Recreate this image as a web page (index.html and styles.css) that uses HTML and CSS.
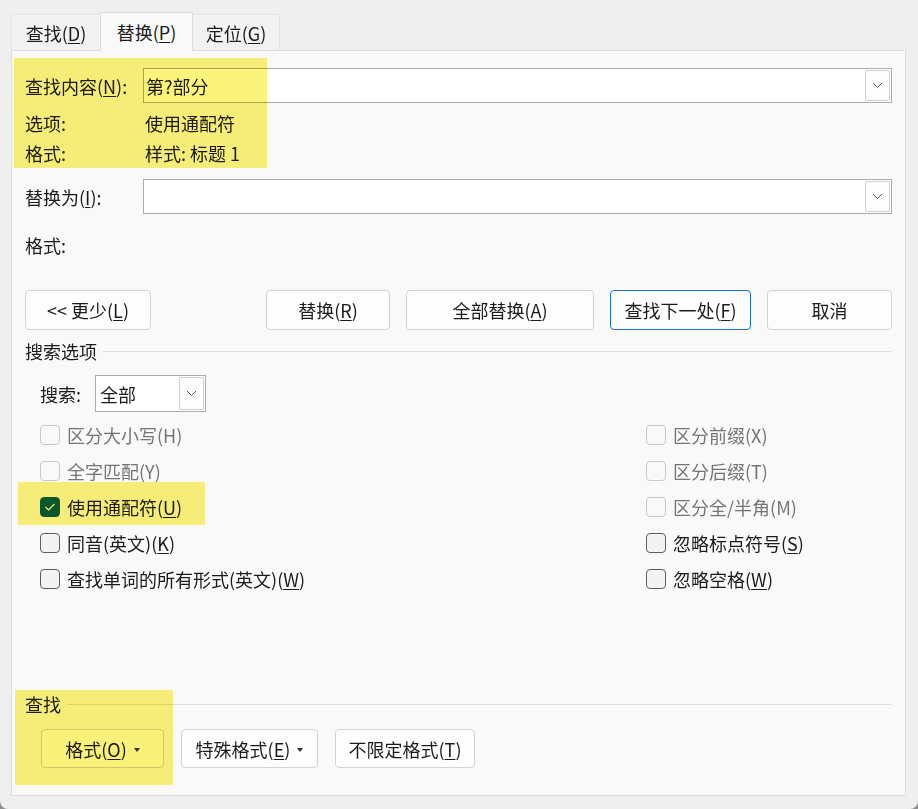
FILE: index.html
```html
<!DOCTYPE html>
<html>

<head>
    <title>查找和替换</title>
    <link rel="stylesheet" href="styles.css">
</head>

<body>
    <div class="window">
        <div class="tabs">
            <div class="tab tab-find">查找(<u>D</u>)</div>
            <div class="tab tab-replace active">替换(<u>P</u>)</div>
            <div class="tab tab-goto">定位(<u>G</u>)</div>
        </div>

        <div class="panel">
            <div class="row row-input">
                <div class="lbl">查找内容(<u>N</u>):</div>
                <div class="combo">
                    <span class="combo-text">第?部分</span>
                    <span class="drop">
                        <svg width="11" height="7" viewBox="0 0 11 7"><polyline points="1,1 5.5,5.5 10,1" fill="none" stroke="#555" stroke-width="1"/></svg>
                    </span>
                </div>
            </div>
            <div class="row row-text options-row">
                <div class="lbl">选项:</div>
                <div class="val">使用通配符</div>
            </div>
            <div class="row row-text">
                <div class="lbl">格式:</div>
                <div class="val">样式: 标题 1</div>
            </div>

            <div class="row row-input replace-row">
                <div class="lbl">替换为(<u>I</u>):</div>
                <div class="combo">
                    <span class="combo-text"></span>
                    <span class="drop">
                        <svg width="11" height="7" viewBox="0 0 11 7"><polyline points="1,1 5.5,5.5 10,1" fill="none" stroke="#555" stroke-width="1"/></svg>
                    </span>
                </div>
            </div>
            <div class="row row-text replace-format">
                <div class="lbl">格式:</div>
            </div>

            <div class="actions">
                <button class="btn btn-less">&lt;&lt; 更少(<u>L</u>)</button>
                <button class="btn btn-replace">替换(<u>R</u>)</button>
                <button class="btn btn-all">全部替换(<u>A</u>)</button>
                <button class="btn btn-next primary">查找下一处(<u>F</u>)</button>
                <button class="btn btn-cancel">取消</button>
            </div>

            <div class="group group-options">搜索选项</div>

            <div class="search-row">
                <span class="search-lbl">搜索:</span>
                <div class="select">
                    <span class="select-text">全部</span>
                    <span class="drop drop-small">
                        <svg width="11" height="7" viewBox="0 0 11 7"><polyline points="1,1 5.5,5.5 10,1" fill="none" stroke="#555" stroke-width="1"/></svg>
                    </span>
                </div>
            </div>

            <div class="checks">
                <div class="check disabled"><span class="box"></span><span>区分大小写(H)</span></div>
                <div class="check disabled"><span class="box"></span><span>区分前缀(X)</span></div>
                <div class="check disabled"><span class="box"></span><span>全字匹配(Y)</span></div>
                <div class="check disabled"><span class="box"></span><span>区分后缀(T)</span></div>
                <div class="check checked">
                    <span class="box">
                        <svg width="12" height="10" viewBox="0 0 12 10"><polyline points="1.5,5 4.5,8 10.5,2" fill="none" stroke="#fff" stroke-width="1.1"/></svg>
                    </span>
                    <span>使用通配符(<u>U</u>)</span>
                </div>
                <div class="check disabled"><span class="box"></span><span>区分全/半角(M)</span></div>
                <div class="check"><span class="box"></span><span>同音(英文)(<u>K</u>)</span></div>
                <div class="check"><span class="box"></span><span>忽略标点符号(<u>S</u>)</span></div>
                <div class="check"><span class="box"></span><span>查找单词的所有形式(英文)(<u>W</u>)</span></div>
                <div class="check"><span class="box"></span><span>忽略空格(<u>W</u>)</span></div>
            </div>

            <div class="group group-find">查找</div>

            <div class="format-actions">
                <button class="btn btn-format">格式(<u>O</u>)<span class="caret"></span></button>
                <button class="btn btn-special">特殊格式(<u>E</u>)<span class="caret"></span></button>
                <button class="btn btn-noformat">不限定格式(<u>T</u>)</button>
            </div>
        </div>

        <!-- marker highlights laid over the dialog -->
        <div class="mark mark-find"></div>
        <div class="mark mark-wildcard"></div>
        <div class="mark mark-format"></div>
    </div>
</body>

</html>
```

FILE: styles.css
```css
body {
    margin: 0;
    background-color: #8e8e8e;
    font-family: "Noto Sans CJK SC", "Noto Sans", sans-serif;
    font-size: 18px;
    color: #1b1b1b;
}

u {
    text-underline-offset: 2px;
}

.window {
    position: relative;
    width: 918px;
    height: 809px;
    background-color: #efefef;
    border-radius: 0 0 8px 8px;
    overflow: hidden;
}

/* tab strip */
.tabs {
    display: flex;
    align-items: flex-end;
    height: 50px;
    padding-left: 11px;
    box-sizing: border-box;
}

.tab {
    display: flex;
    align-items: center;
    justify-content: center;
    height: 36px;
    box-sizing: border-box;
    background-color: #f2f2f2;
    border: 1px solid #e4e4e4;
    border-bottom: none;
    line-height: 24px;
}

.tab-find {
    width: 89px;
    border-right: none;
}

.tab-replace {
    width: 93px;
}

.tab-goto {
    width: 87px;
    border-left: none;
}

.tab.active {
    position: relative;
    z-index: 1;
    height: 39px;
    margin-bottom: -1px;
    padding-bottom: 1px;
    background-color: #f9f9f9;
    border-color: #dddddd;
}

/* main panel */
.panel {
    margin-left: 11px;
    width: 895px;
    height: 746px;
    box-sizing: border-box;
    padding: 17px 13px 0 13px;
    background-color: #f9f9f9;
    border: 1px solid #dddddd;
}

.row {
    display: flex;
    align-items: center;
}

.row-input {
    height: 35px;
}

.row-text {
    height: 30px;
}

.lbl {
    width: 118px;
    flex: none;
    line-height: 24px;
}

.val {
    padding-left: 2px;
    line-height: 24px;
}

.options-row {
    margin-top: 5px;
}

.replace-row {
    margin-top: 11px;
}

.replace-format {
    margin-top: 16px;
}

.combo {
    flex: 1;
    display: flex;
    align-items: center;
    height: 35px;
    box-sizing: border-box;
    padding-left: 2px;
    background-color: #fff;
    border: 1px solid #ababab;
}

.combo-text {
    line-height: 24px;
}

.drop {
    display: flex;
    align-items: center;
    justify-content: center;
    margin-left: auto;
    margin-right: 1px;
    width: 25px;
    height: 31px;
    box-sizing: border-box;
    border: 1px solid #d0d0d0;
    border-radius: 2px;
    background-color: #fdfdfd;
}

.drop-small {
    height: 33px;
}

/* buttons */
.btn {
    display: flex;
    align-items: center;
    justify-content: center;
    height: 40px;
    padding: 0;
    box-sizing: border-box;
    font-family: inherit;
    font-size: 18px;
    color: #1b1b1b;
    background-color: #fdfdfd;
    border: 1px solid #d3d3d3;
    border-radius: 4px;
    line-height: 24px;
}

.btn.primary {
    border-color: #1a6fc2;
}

.actions {
    display: flex;
    gap: 16px;
    margin-top: 30px;
}

.btn-less {
    width: 126px;
    margin-right: auto;
}

.btn-replace {
    width: 124px;
}

.btn-all {
    width: 188px;
}

.btn-next {
    width: 141px;
}

.btn-cancel {
    width: 125px;
}

/* group titles with rule */
.group {
    display: flex;
    align-items: center;
    height: 20px;
    line-height: 24px;
}

.group::after {
    content: "";
    flex: 1;
    height: 1px;
    margin-left: 6px;
    background-color: #dedede;
}

.group-options {
    margin-top: 11px;
}

.group-find {
    margin-top: 97px;
}

.search-row {
    display: flex;
    align-items: center;
    height: 37px;
    margin-top: 14px;
    margin-left: 15px;
}

.search-lbl {
    width: 55px;
    line-height: 24px;
}

.select {
    display: flex;
    align-items: center;
    width: 111px;
    height: 37px;
    box-sizing: border-box;
    padding-left: 4px;
    background-color: #fff;
    border: 1px solid #ababab;
}

.select-text {
    line-height: 24px;
}

/* option checkboxes */
.checks {
    display: grid;
    grid-template-columns: 606px 1fr;
    grid-auto-rows: 36px;
    margin-top: 5px;
    margin-left: 15px;
}

.check {
    display: flex;
    align-items: center;
    gap: 7px;
    line-height: 24px;
}

.box {
    display: flex;
    align-items: center;
    justify-content: center;
    flex: none;
    width: 20px;
    height: 20px;
    box-sizing: border-box;
    border: 1px solid #5d5d5d;
    border-radius: 4px;
    background-color: #f3f3f3;
}

.check.disabled {
    color: #757575;
}

.check.disabled .box {
    border-color: #c9c9c9;
    background-color: #f9f9f9;
}

.check.checked .box {
    border-color: #0b5a5a;
    background-color: #0b5a5a;
}

.format-actions {
    display: flex;
    gap: 17px;
    margin-top: 15px;
    margin-left: 16px;
}

.format-actions .btn {
    height: 39px;
}

.btn-format {
    width: 123px;
}

.btn-special {
    width: 137px;
}

.btn-noformat {
    width: 140px;
}

.caret {
    display: inline-block;
    margin-left: 7px;
    margin-top: 2px;
    border-left: 3.5px solid transparent;
    border-right: 3.5px solid transparent;
    border-top: 4px solid #333;
}

/* yellow marker boxes */
.mark {
    position: absolute;
    background-color: #fbf37a;
    mix-blend-mode: multiply;
    pointer-events: none;
}

.mark-find {
    left: 14px;
    top: 58px;
    width: 253px;
    height: 110px;
}

.mark-wildcard {
    left: 18px;
    top: 482px;
    width: 187px;
    height: 43px;
}

.mark-format {
    left: 15px;
    top: 690px;
    width: 158px;
    height: 95px;
}
```
